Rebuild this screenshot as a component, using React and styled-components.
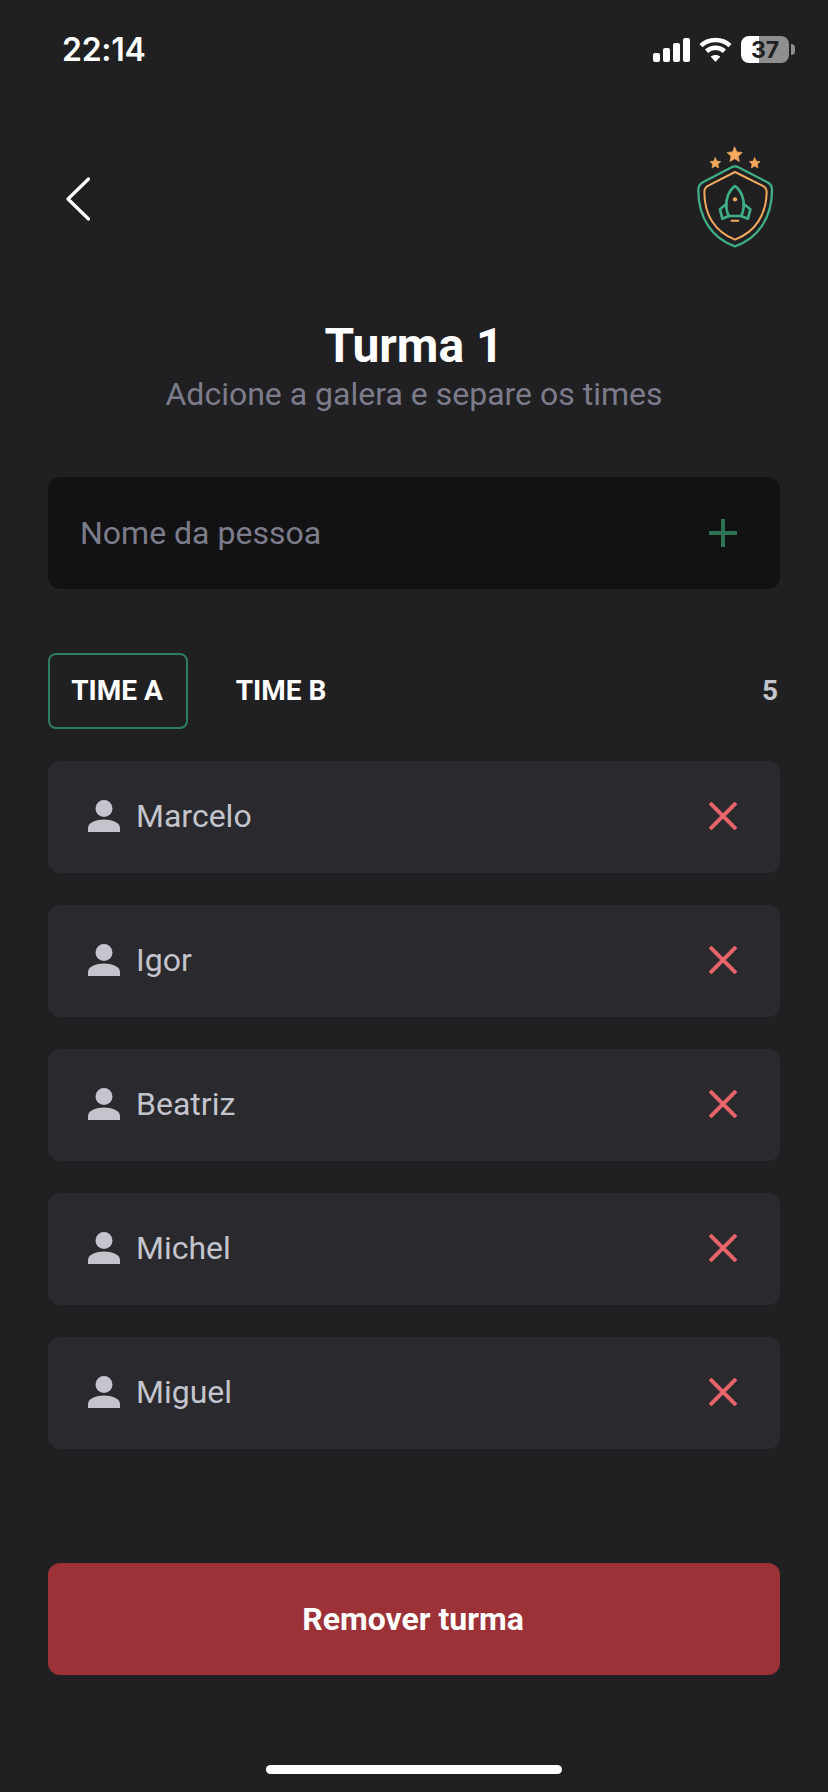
import React from "react";
import styled, { createGlobalStyle } from "styled-components";

const Global = createGlobalStyle`
  html, body { margin: 0; padding: 0; background: #202022; }
  * { box-sizing: border-box; }
`;

const Screen = styled.div`
  width: 828px;
  height: 1792px;
  background: #202022;
  display: flex;
  flex-direction: column;
  overflow: hidden;
  font-family: Roboto, "Liberation Sans", sans-serif;
`;

const StatusBar = styled.div`
  height: 99px;
  padding: 0 39px 0 62px;
  display: flex;
  align-items: center;
  justify-content: space-between;
`;

const Clock = styled.span`
  font-family: Inter, sans-serif;
  font-size: 32px;
  font-weight: 600;
  color: #fff;
  letter-spacing: -0.3px;
`;

const StatusIcons = styled.div`
  display: flex;
  align-items: center;
  gap: 9px;
`;

const Battery = styled.div`
  position: relative;
  width: 48px;
  height: 27px;
  border-radius: 8px;
  display: flex;
  align-items: center;
  justify-content: center;
  font-family: Inter, sans-serif;
  font-size: 23px;
  font-weight: 700;
  color: #202022;
  background: linear-gradient(to right, #fff ${(p) => p.$level}%, #8f8f8f ${(p) => p.$level}%);
  &::after {
    content: "";
    position: absolute;
    right: -6px;
    top: 8px;
    width: 4px;
    height: 11px;
    border-radius: 0 4px 4px 0;
    background: #8f8f8f;
  }
`;

const Content = styled.main`
  flex: 1;
  display: flex;
  flex-direction: column;
  padding: 0 48px;
`;

const Header = styled.header`
  margin-top: 46px;
  height: 103px;
  display: flex;
  align-items: center;
  justify-content: space-between;
  padding: 0 4px 0 18px;
`;

const BackIcon = styled.svg`
  margin-top: 4px;
`;

const TitleBlock = styled.div`
  margin-top: 70px;
  text-align: center;
`;

const Title = styled.h1`
  margin: 0;
  font-size: 48px;
  line-height: 56px;
  font-weight: 700;
  color: #fff;
`;

const Subtitle = styled.p`
  margin: 0;
  font-size: 32px;
  line-height: 40px;
  color: #7c7c8a;
`;

const InputBox = styled.div`
  margin-top: 63px;
  height: 112px;
  border-radius: 12px;
  background: #121214;
  padding: 0 43px 0 32px;
  display: flex;
  align-items: center;
  justify-content: space-between;
`;

const Placeholder = styled.span`
  font-size: 32px;
  color: #7c7c8a;
`;

const TabsRow = styled.div`
  margin-top: 64px;
  height: 76px;
  display: flex;
  align-items: center;
  gap: 24px;
`;

const Tab = styled.div`
  width: 140px;
  height: 76px;
  padding: 0 2px 2px 0;
  border-radius: 8px;
  border: 2px solid ${(p) => (p.$active ? "#2f7d5f" : "transparent")};
  display: flex;
  align-items: center;
  justify-content: center;
  font-size: 28px;
  font-weight: 700;
  color: #fff;
`;

const Count = styled.span`
  margin: 0 0 2px auto;
  padding-right: 2px;
  font-size: 28px;
  font-weight: 700;
  color: #c4c4cc;
`;

const PlayerList = styled.ul`
  margin: 32px 0 0;
  padding: 0;
  list-style: none;
  display: flex;
  flex-direction: column;
  gap: 32px;
`;

const PlayerRow = styled.li`
  height: 112px;
  border-radius: 12px;
  background: #29292e;
  padding: 0 43px 2px 40px;
  display: flex;
  align-items: center;
`;

const PlayerName = styled.span`
  margin-left: 16px;
  flex: 1;
  font-size: 32px;
  color: #c4c4cc;
`;

const RemoveButton = styled.button`
  margin-top: 114px;
  height: 112px;
  padding: 0 2px 0 0;
  border: 0;
  border-radius: 12px;
  background: #9c3238;
  color: #fff;
  font-family: inherit;
  font-size: 32px;
  font-weight: 700;
`;

const HomeBar = styled.div`
  margin: 90px auto 0;
  width: 296px;
  height: 9px;
  border-radius: 5px;
  background: #fff;
`;

const Signal = () => (
  <svg width="37" height="24" viewBox="0 0 37 24" fill="#fff">
    <rect x="0" y="15" width="7" height="9" rx="2" />
    <rect x="10" y="10" width="7" height="14" rx="2" />
    <rect x="20" y="5" width="7" height="19" rx="2" />
    <rect x="30" y="0" width="7" height="24" rx="2" />
  </svg>
);

const Wifi = () => (
  <svg width="33" height="25" viewBox="0 0 33 25" fill="none" stroke="#fff" strokeWidth="4.6">
    <path d="M2 8.6C10 1.2 23 1.2 31 8.6" />
    <path d="M7.6 14.2C12.6 9.6 20.4 9.6 25.4 14.2" />
    <path d="M16.5 25L11.6 19.6C14.4 17.3 18.6 17.3 21.4 19.6Z" fill="#fff" stroke="none" />
  </svg>
);

const Chevron = () => (
  <BackIcon width="24" height="44" viewBox="0 0 24 44" fill="none" stroke="#fff" strokeWidth="3.2" strokeLinecap="round" strokeLinejoin="round">
    <path d="M22.5 2L2 22L22.5 42" />
  </BackIcon>
);

const Star = ({ cx, cy, r }) => {
  const pts = [];
  for (let i = 0; i < 10; i++) {
    const rad = i % 2 === 0 ? r : r * 0.48;
    const a = -Math.PI / 2 + (i * Math.PI) / 5;
    pts.push(`${cx + rad * Math.cos(a)},${cy + rad * Math.sin(a)}`);
  }
  return <polygon points={pts.join(" ")} fill="#f4a95c" stroke="#f4a95c" strokeWidth="2" strokeLinejoin="round" />;
};

const Logo = () => (
  <svg width="80" height="103" viewBox="105 45 240 309" fill="none" strokeLinejoin="round" strokeLinecap="round">
    <Star cx={221} cy={75} r={24} />
    <Star cx={163} cy={100} r={17} />
    <Star cx={281} cy={100} r={17} />
    <path
      d="M222 109C226 109 229 110 232 112L318 156C328 161 333 169 333 180C333 265 290 325 222 349C154 325 112 265 112 180C112 169 117 161 127 156L212 112C215 110 218 109 222 109Z"
      stroke="#3fae85"
      strokeWidth="7"
    />
    <path
      d="M222 126L304 167C312 171 317 176 317 186C316 255 282 306 222 329C162 306 130 255 130 186C130 176 134 171 142 167Z"
      stroke="#f4a95c"
      strokeWidth="6"
    />
    <path
      d="M222 168C240 180 250 205 248 232C247 243 244 252 240 258H204C200 252 197 243 196 232C194 205 204 180 222 168Z"
      stroke="#3fae85"
      strokeWidth="8"
    />
    <path d="M196 222L177 238L184 266L204 258" stroke="#3fae85" strokeWidth="8" />
    <path d="M248 222L268 238L261 266L240 258" stroke="#3fae85" strokeWidth="8" />
    <circle cx="222" cy="208" r="6.5" fill="#f4a95c" />
    <path d="M212 272H232" stroke="#f4a95c" strokeWidth="6" />
  </svg>
);

const Plus = () => (
  <svg width="28" height="28" viewBox="0 0 28 28" stroke="#2f7355" strokeWidth="4">
    <path d="M14 0V28M0 14H28" />
  </svg>
);

const Cross = () => (
  <svg width="28" height="28" viewBox="0 0 28 28" stroke="#e9636a" strokeWidth="4">
    <path d="M1 1L27 27M27 1L1 27" />
  </svg>
);

const Person = () => (
  <svg width="32" height="32" viewBox="0 0 32 32" fill="#c4c4cc">
    <circle cx="16" cy="8.5" r="8.5" />
    <path d="M0 32V28C0 22.5 8 19.5 16 19.5S32 22.5 32 28V32Z" />
  </svg>
);

const players = ["Marcelo", "Igor", "Beatriz", "Michel", "Miguel"];

export default function App() {
  return (
    <Screen>
      <Global />
      <StatusBar>
        <Clock>22:14</Clock>
        <StatusIcons>
          <Signal />
          <Wifi />
          <Battery $level={37}>37</Battery>
        </StatusIcons>
      </StatusBar>
      <Content>
        <Header>
          <Chevron />
          <Logo />
        </Header>
        <TitleBlock>
          <Title>Turma 1</Title>
          <Subtitle>Adcione a galera e separe os times</Subtitle>
        </TitleBlock>
        <InputBox>
          <Placeholder>Nome da pessoa</Placeholder>
          <Plus />
        </InputBox>
        <TabsRow>
          <Tab $active>TIME A</Tab>
          <Tab>TIME B</Tab>
          <Count>5</Count>
        </TabsRow>
        <PlayerList>
          {players.map((name) => (
            <PlayerRow key={name}>
              <Person />
              <PlayerName>{name}</PlayerName>
              <Cross />
            </PlayerRow>
          ))}
        </PlayerList>
        <RemoveButton>Remover turma</RemoveButton>
        <HomeBar />
      </Content>
    </Screen>
  );
}
